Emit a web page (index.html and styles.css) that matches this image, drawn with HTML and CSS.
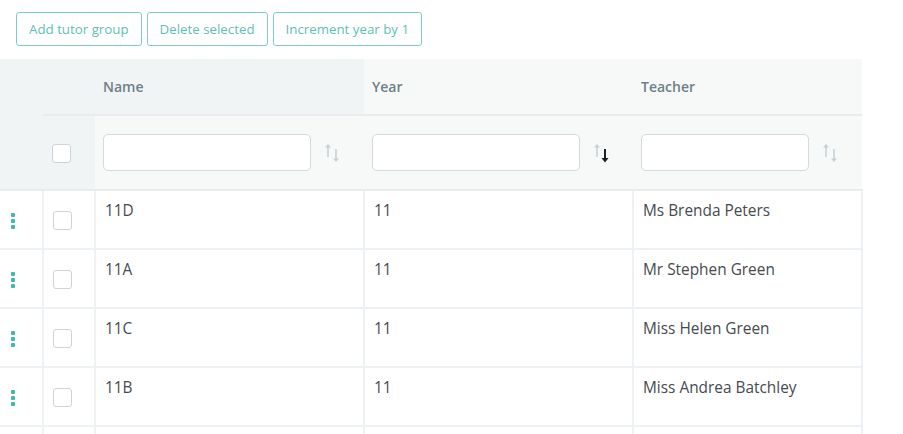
FILE: index.html
```html
<!DOCTYPE html>
<html>
<head>
<meta charset="utf-8">
<link rel="stylesheet" href="styles.css">
</head>
<body>
<div class="page">
  <div class="toolbar">
    <button class="btn">Add tutor group</button>
    <button class="btn">Delete selected</button>
    <button class="btn">Increment year by 1</button>
  </div>
  <table class="grid">
    <colgroup>
      <col class="c-menu"><col class="c-check"><col class="c-name"><col class="c-year"><col class="c-teacher">
    </colgroup>
    <thead>
      <tr class="head-titles">
        <th rowspan="2" class="dark menu-head"></th>
        <th class="dark"></th>
        <th class="dark title">Name</th>
        <th class="title">Year</th>
        <th class="title">Teacher</th>
      </tr>
      <tr class="head-filters">
        <th class="dark check-cell"><span class="checkbox"></span></th>
        <th><div class="filter"><input class="filter-input" type="text"><svg class="sort" viewBox="0 0 18 22" width="18" height="22"><path d="M4 15V4" class="s-off"/><path d="M1 5.5L4 2L7 5.5Z" class="f-off"/><path d="M12 7V18" class="s-off"/><path d="M9 16.5L12 20L15 16.5Z" class="f-off"/></svg></div></th>
        <th><div class="filter"><input class="filter-input" type="text"><svg class="sort" viewBox="0 0 18 22" width="18" height="22"><path d="M4 15V4" class="s-off"/><path d="M1 5.5L4 2L7 5.5Z" class="f-off"/><path d="M12 7V18" class="s-on"/><path d="M8.5 16L12 20.5L15.5 16Z" class="f-on"/></svg></div></th>
        <th><div class="filter"><input class="filter-input" type="text"><svg class="sort" viewBox="0 0 18 22" width="18" height="22"><path d="M4 15V4" class="s-off"/><path d="M1 5.5L4 2L7 5.5Z" class="f-off"/><path d="M12 7V18" class="s-off"/><path d="M9 16.5L12 20L15 16.5Z" class="f-off"/></svg></div></th>
      </tr>
    </thead>
    <tbody>
      <tr>
        <td class="menu-cell"><span class="dots"><i></i><i></i><i></i></span></td>
        <td class="check-cell"><span class="checkbox"></span></td>
        <td>11D</td><td>11</td><td>Ms Brenda Peters</td>
      </tr>
      <tr>
        <td class="menu-cell"><span class="dots"><i></i><i></i><i></i></span></td>
        <td class="check-cell"><span class="checkbox"></span></td>
        <td>11A</td><td>11</td><td>Mr Stephen Green</td>
      </tr>
      <tr>
        <td class="menu-cell"><span class="dots"><i></i><i></i><i></i></span></td>
        <td class="check-cell"><span class="checkbox"></span></td>
        <td>11C</td><td>11</td><td>Miss Helen Green</td>
      </tr>
      <tr>
        <td class="menu-cell"><span class="dots"><i></i><i></i><i></i></span></td>
        <td class="check-cell"><span class="checkbox"></span></td>
        <td>11B</td><td>11</td><td>Miss Andrea Batchley</td>
      </tr>
      <tr>
        <td class="menu-cell"></td><td class="check-cell"></td><td></td><td></td><td></td>
      </tr>
    </tbody>
  </table>
</div>
</body>
</html>
```

FILE: styles.css
```css
html, body {
  margin: 0;
  padding: 0;
  background: #ffffff;
  font-family: "Open Sans", "Noto Sans", sans-serif;
  color: #444a4f;
}

.page {
  padding-top: 12px;
}

.toolbar {
  display: flex;
  gap: 5px;
  padding-left: 16px;
  margin-bottom: 13px;
}

.btn {
  font-family: "Open Sans", "Noto Sans", sans-serif;
  font-size: 13.3px;
  color: #5ebfb6;
  background: #ffffff;
  border: 1.5px solid #7ccfc6;
  border-radius: 3px;
  height: 34px;
  padding: 0 12px;
  cursor: pointer;
}

.grid {
  border-collapse: collapse;
  table-layout: fixed;
  width: 862px;
}

.c-menu { width: 43px; }
.c-check { width: 52px; }
.c-name { width: 269px; }
.c-year { width: 269px; }
.c-teacher { width: 229px; }

.grid th {
  background: #f7f9f9;
  padding: 0 8px;
  text-align: left;
  font-weight: 600;
  font-size: 14px;
  color: #6e7f8a;
}

.grid th.dark {
  background: #f1f4f5;
}

.head-titles th {
  height: 55px;
}

.head-titles th:not(.menu-head) {
  border-bottom: 2px solid #e8ecee;
}

.head-filters th {
  height: 73px;
  border-bottom: 2px solid #e8ecee;
}

.menu-head {
  border-bottom: 2px solid #e8ecee;
}

.filter {
  display: flex;
  align-items: center;
  gap: 13px;
  padding-right: 14px;
}

.filter-input {
  flex: 1;
  min-width: 0;
  height: 37px;
  box-sizing: border-box;
  border: 1.5px solid #d6d9da;
  border-radius: 5px;
  background: #ffffff;
  margin: 0;
}

.sort {
  flex: none;
  fill: none;
  stroke-width: 1.6;
}

.s-off { stroke: #c6d1d6; }
.f-off { fill: #c6d1d6; }
.s-on { stroke: #1d1f20; stroke-width: 2; }
.f-on { fill: #1d1f20; }

.grid td {
  height: 59px;
  padding: 9px 9px 0;
  box-sizing: border-box;
  vertical-align: top;
  font-size: 15.4px;
  color: #454b50;
  border: 2px solid #eef1f3;
  border-top: none;
}

.grid td:first-child {
  border-left: none;
}

.grid td.menu-cell {
  vertical-align: middle;
  text-align: left;
  padding: 0 0 0 11px;
}

.grid .check-cell,
.grid td.check-cell {
  vertical-align: middle;
  text-align: left;
  padding: 0 0 0 9px;
}

.checkbox {
  display: inline-block;
  width: 17px;
  height: 17px;
  border: 1.5px solid #cfd3d5;
  border-radius: 3px;
  background: #ffffff;
  vertical-align: middle;
}

.dots {
  display: inline-flex;
  flex-direction: column;
  gap: 2px;
  vertical-align: middle;
}

.dots i {
  display: block;
  width: 4px;
  height: 4px;
  background: #3dbab0;
  border-radius: 1px;
}
```
